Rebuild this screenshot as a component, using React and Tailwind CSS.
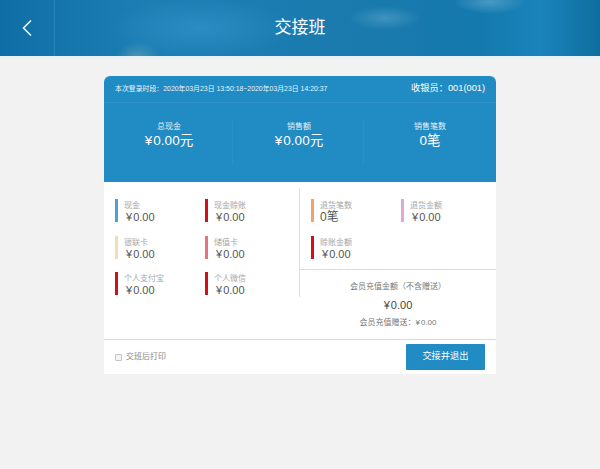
const FONT = "font-['Liberation_Sans','Noto_Sans_CJK_SC',sans-serif]"

const leftItems = [
  { label: '现金', value: '0.00', color: 'bg-[#4d9fdc]' },
  { label: '现金赊账', value: '0.00', color: 'bg-[#d2101c]' },
  { label: '银联卡', value: '0.00', color: 'bg-[#f6dcb4]' },
  { label: '储值卡', value: '0.00', color: 'bg-[#e8737b]' },
  { label: '个人支付宝', value: '0.00', color: 'bg-[#d2101c]' },
  { label: '个人微信', value: '0.00', color: 'bg-[#d2101c]' },
]

const rightItems = [
  { label: '退货笔数', count: '0笔', color: 'bg-[#f4a26c]' },
  { label: '退货金额', value: '0.00', color: 'bg-[#e0a8d8]' },
  { label: '赊账金额', value: '0.00', color: 'bg-[#d2101c]' },
]

const totals = [
  { label: '总现金', value: '0.00元', yen: true },
  { label: '销售额', value: '0.00元', yen: true },
  { label: '销售笔数', value: '0笔' },
]

// the yen sign sits a bit apart from the digits in the original
function Yen({ value }) {
  return (
    <>
      <span className="mr-[1px]">¥</span>
      {value}
    </>
  )
}

function PayItem({ item }) {
  return (
    <div className="flex h-[23px] w-[90px]">
      <div className={`w-[3px] h-[23px] ${item.color}`}></div>
      <div className="ml-[6px]">
        <div className="text-[8px] leading-[11px] mt-[1px] text-[#a6a6a6] whitespace-nowrap">{item.label}</div>
        {item.count
          ? <div className="text-[12px] leading-[13px] text-[#555] whitespace-nowrap">{item.count}</div>
          : <div className="text-[11px] leading-[13px] text-[#555] whitespace-nowrap ml-[2px]"><Yen value={item.value} /></div>}
      </div>
    </div>
  )
}

export default function App() {
  return (
    <div className={`min-h-[469px] bg-[#f2f2f3] ${FONT}`}>
      <div className="h-[58px] border-b-2 border-[#e4f2fb] bg-[radial-gradient(ellipse_36px_12px_at_385px_18px,#3f93bf,transparent),radial-gradient(ellipse_36px_12px_at_490px_2px,#4a9ac4,transparent),radial-gradient(ellipse_22px_16px_at_138px_58px,#4f97b5,transparent),radial-gradient(ellipse_90px_30px_at_200px_28px,#2a8cc2,transparent),linear-gradient(90deg,#0f6ea6,#1c7fb4_25%,#1a7aae_60%,#1479ad_80%,#1a84bb_90%,#0f6e9f)] flex items-center">
        <div className="w-[55px] h-full flex items-center justify-center border-r border-[#2484b9]">
          <svg width="12" height="18" viewBox="0 0 12 18" fill="none">
            <path d="M10 1.5 L2.5 9 L10 16.5" stroke="#eaf5fb" strokeWidth="1.6" />
          </svg>
        </div>
        <div className="flex-1 text-center text-white text-[17px] pr-[55px]">交接班</div>
      </div>

      <div className="mt-[18px] mx-auto w-[392px] h-[298px] bg-white rounded-t-[6px] flex flex-col">
        <div className="bg-[#218bc3] rounded-t-[6px] h-[106px] text-white">
          <div className="h-[27px] flex items-center justify-between pl-[11px] pr-[11px] border-b border-[#2f93c7]">
            <div className="text-[6.9px] text-[#e8f4fa]">本次登录时段：2020年03月23日 13:50:18~2020年03月23日 14:20:37</div>
            <div className="text-[9.25px]">收银员：001(001)</div>
          </div>
          <div className="flex pt-[18px]">
            {totals.map((t, i) => (
              <div key={t.label} className={`h-[44px] text-center ${i === 0 ? 'w-[129px] pl-[2px]' : i === 1 ? 'w-[131px] pl-[2px]' : 'w-[132px]'} ${i < 2 ? 'border-r border-[#2b90c6]' : ''}`}>
                <div className="text-[8px] leading-[12px] text-[#e4f1f8]">{t.label}</div>
                <div className="text-[13.5px] leading-[16px]">
                  {t.yen ? <Yen value={t.value} /> : t.value}
                </div>
              </div>
            ))}
          </div>
        </div>

        <div className="flex h-[158px] border-b border-[#dcdcdc]">
          <div className="w-[196px] h-[109px] mt-[6px] pl-[11px] pt-[11px] border-r border-[#e2e2e2] grid grid-cols-[90px_90px] auto-rows-[36.5px]">
            {leftItems.map(item => <PayItem key={item.label} item={item} />)}
          </div>
          <div className="w-[196px]">
            <div className="h-[88px] border-b border-[#dcdcdc] pl-[11px] pt-[17px] grid grid-cols-[90px_90px] auto-rows-[36.5px]">
              {rightItems.map(item => <PayItem key={item.label} item={item} />)}
            </div>
            <div className="text-center pt-[10px]">
              <div className="text-[8px] leading-[14px] text-[#777]">会员充值金额（不含赠送）</div>
              <div className="text-[11px] leading-[14px] text-[#444] mt-[4px]"><Yen value="0.00" /></div>
              <div className="text-[8px] leading-[12px] text-[#777] mt-[5px]">会员充值赠送：<Yen value="0.00" /></div>
            </div>
          </div>
        </div>

        <div className="flex-1 flex items-center justify-between pl-[11px] pr-[11px]">
          <div className="flex items-center text-[8px] text-[#888]">
            <span className="w-[7px] h-[7px] border border-[#c4c4c4] bg-[#f4f4f4] rounded-[1px] mr-[4px]"></span>
            交班后打印
          </div>
          <div className="w-[79px] h-[26px] bg-[#218bc3] text-white text-[9.25px] flex items-center justify-center rounded-[1px]">交接并退出</div>
        </div>
      </div>
    </div>
  )
}
